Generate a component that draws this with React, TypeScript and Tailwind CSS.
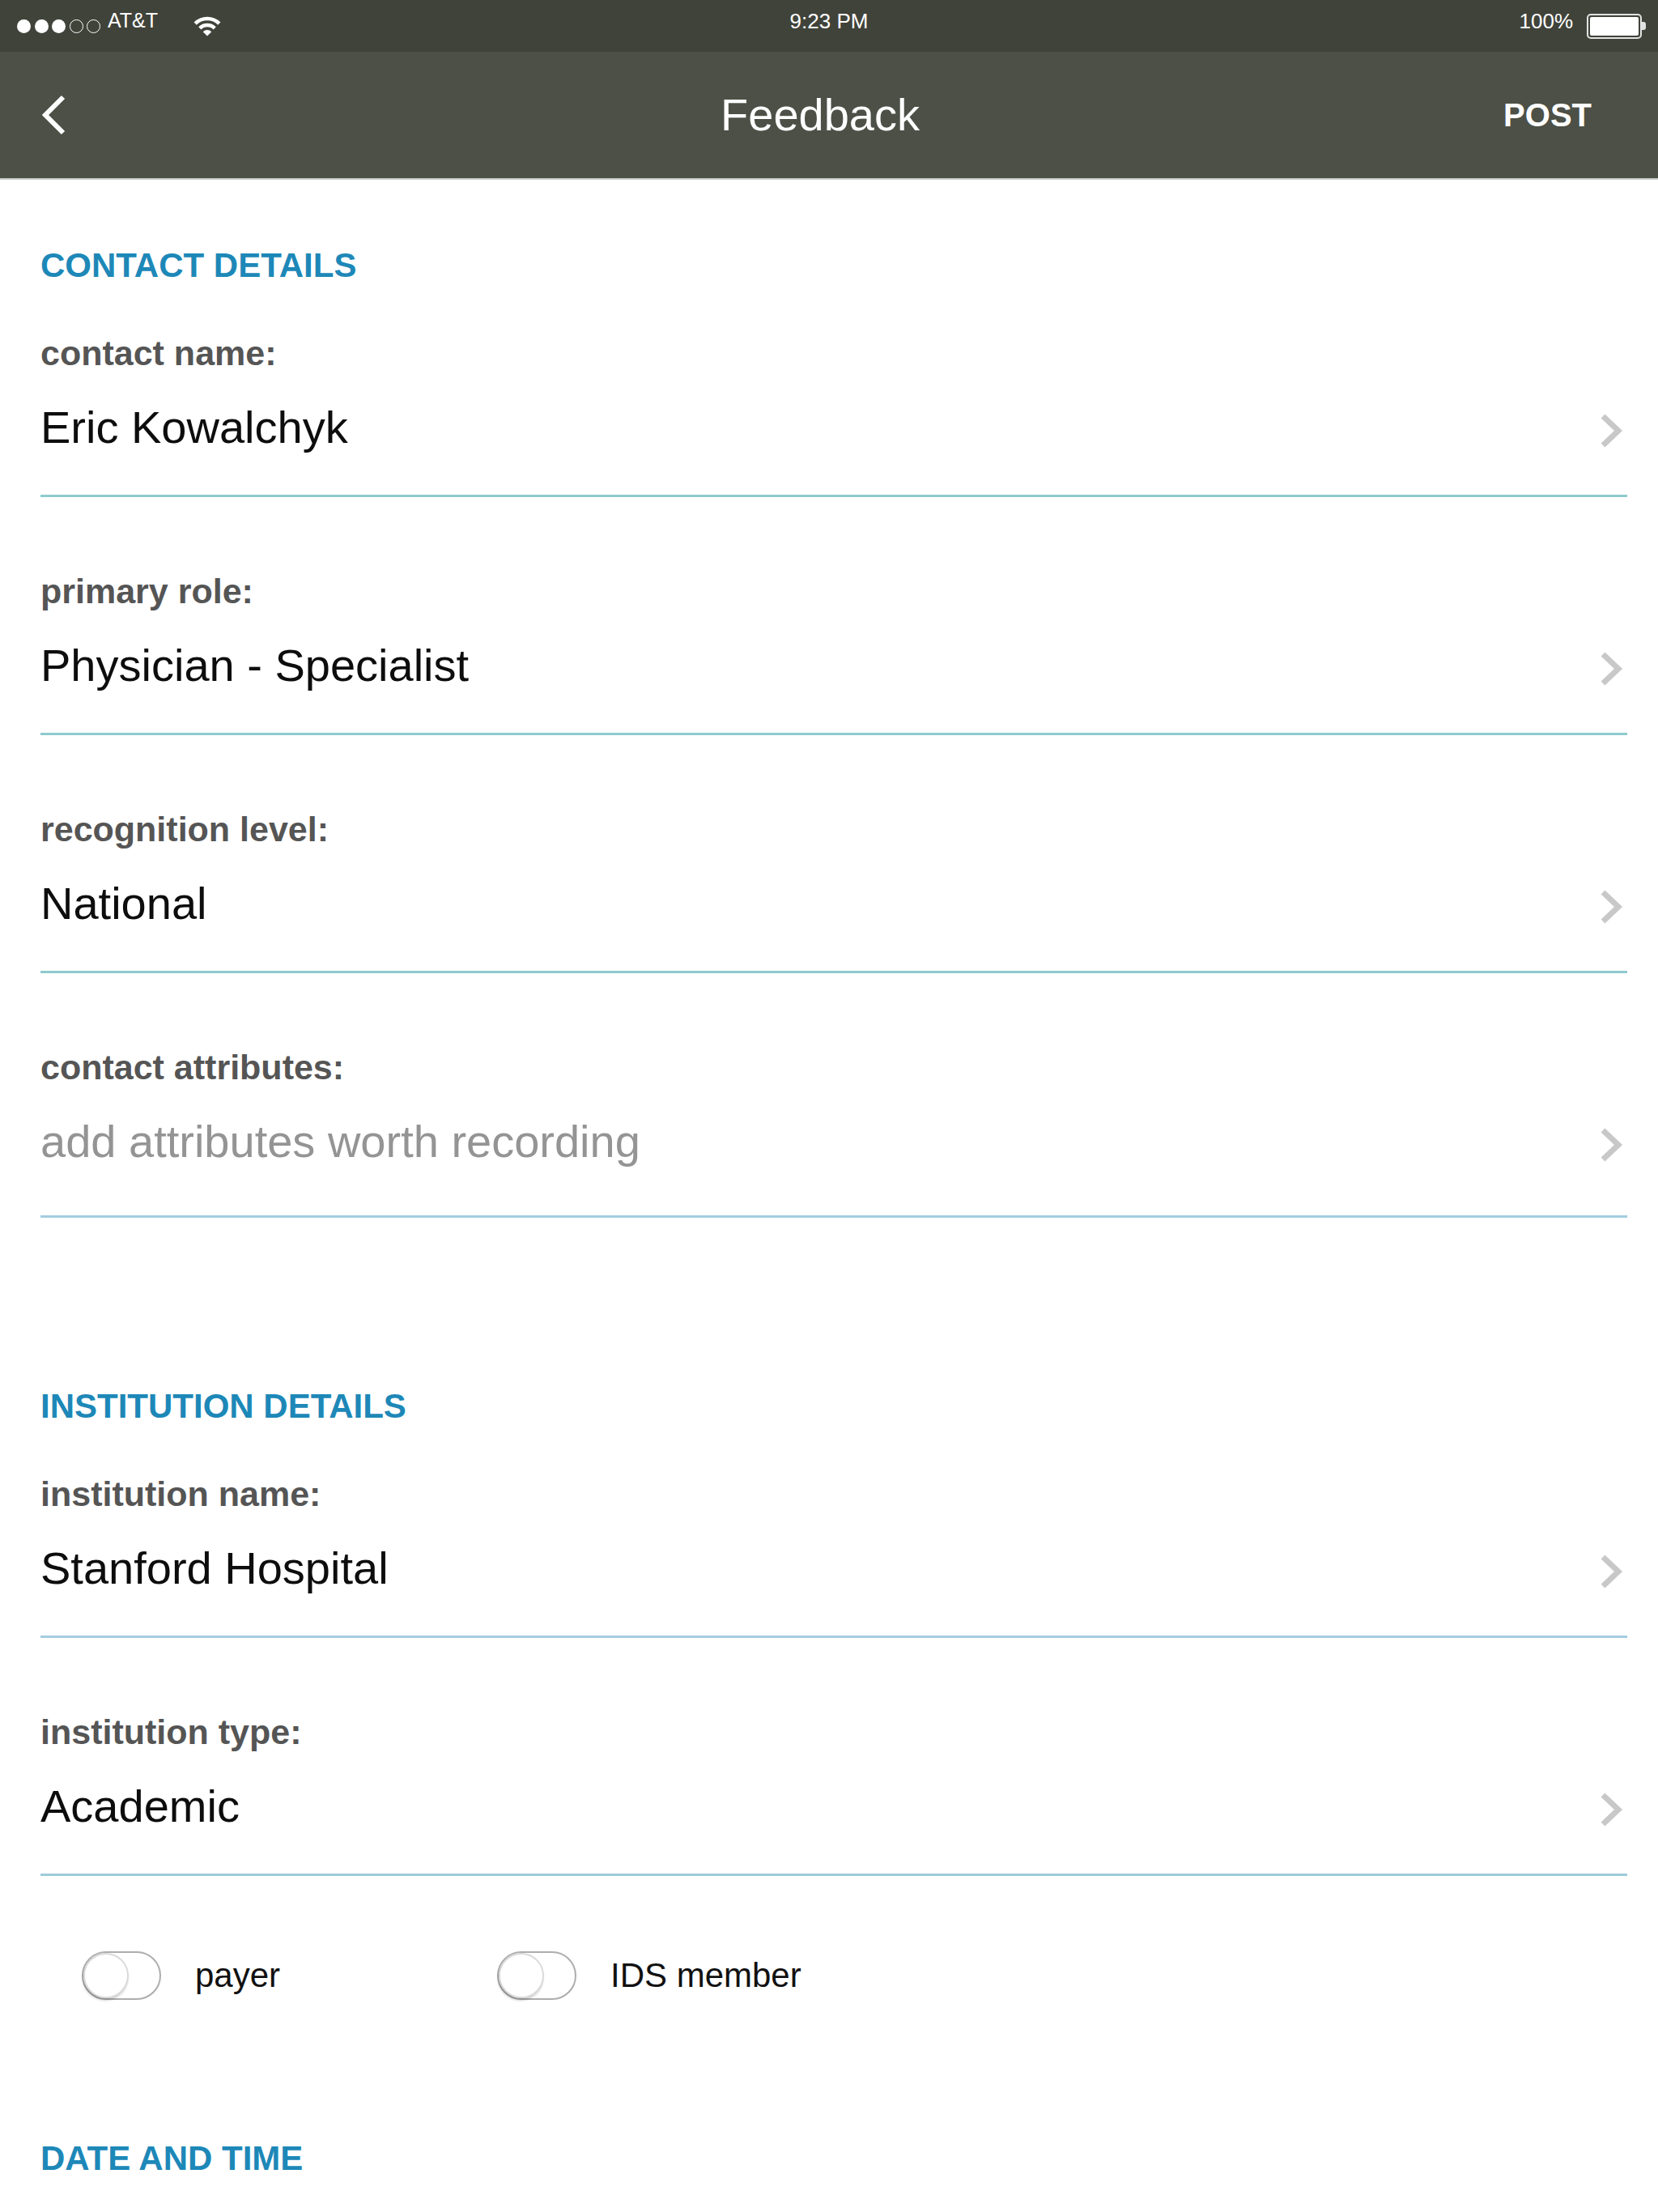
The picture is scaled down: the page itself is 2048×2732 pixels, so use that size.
import React from "react";

const ChevronRight = () => (
  <svg width="30" height="44" viewBox="0 0 30 44" className="mr-[4px] mt-[7px] shrink-0">
    <polyline points="4,4 23,22 4,40" fill="none" stroke="#c8c8c8" strokeWidth="7" />
  </svg>
);

const BackChevron = () => (
  <svg width="36" height="50" viewBox="0 0 36 50" className="ml-[48px]">
    <polyline points="30,3 8,25 30,47" fill="none" stroke="#ffffff" strokeWidth="6" />
  </svg>
);

const Wifi = () => (
  <svg width="38" height="27" viewBox="0 0 38 27" className="ml-[42px]">
    <path d="M4.2 10.2 A21 21 0 0 1 33.8 10.2" fill="none" stroke="#ffffff" strokeWidth="4.5" />
    <path d="M9.8 15.8 A13 13 0 0 1 28.2 15.8" fill="none" stroke="#ffffff" strokeWidth="4.5" />
    <path d="M19 25.5 L13.7 20.2 A7.5 7.5 0 0 1 24.3 20.2 Z" fill="#ffffff" />
  </svg>
);

const Battery = () => (
  <div className="flex items-center">
    <div className="h-[31px] w-[68px] rounded-[5px] border-2 border-[#e2e2e2] p-[2px]">
      <div className="h-full w-full rounded-[2px] bg-white" />
    </div>
    <div className="h-[10px] w-[5px] rounded-r-[3px] bg-[#e2e2e2]" />
  </div>
);

const SignalDots = () => (
  <div className="flex items-center gap-[4.5px]">
    <span className="h-[17px] w-[17px] rounded-full bg-white" />
    <span className="h-[17px] w-[17px] rounded-full bg-white" />
    <span className="h-[17px] w-[17px] rounded-full bg-white" />
    <span className="h-[17px] w-[17px] rounded-full border-[1.5px] border-white" />
    <span className="h-[17px] w-[17px] rounded-full border-[1.5px] border-white" />
  </div>
);

const SectionHeader = ({ children, top }: { children: React.ReactNode; top: string }) => (
  <h2 className={`${top} text-[42px] leading-[42px] font-bold text-[#1d88b8]`}>{children}</h2>
);

type FieldProps = {
  label: string;
  value: string;
  placeholder?: boolean;
  top?: string;
  gap?: string;
  line?: string;
};

const Field = ({
  label,
  value,
  placeholder = false,
  top = "pt-[95px]",
  gap = "mt-[55px]",
  line = "bg-[#8ecacd]",
}: FieldProps) => (
  <div className={top}>
    <div className="text-[43px] leading-[43px] font-bold text-[#555555]">{label}</div>
    <div className="mt-[42px] flex items-center">
      <div
        className={`flex-1 text-[56px] leading-[56px] ${placeholder ? "text-[#949494]" : "text-[#0d0d0d]"}`}
      >
        {value}
      </div>
      <ChevronRight />
    </div>
    <div className={`${gap} h-[3px] ${line}`} />
  </div>
);

const Toggle = () => (
  <div className="flex h-[60px] w-[98px] shrink-0 items-center rounded-full border-2 border-[#adadad] bg-white">
    <div className="h-[56px] w-[56px] rounded-full border-2 border-[#dadada] bg-white shadow-[-1px_3px_3px_rgba(0,0,0,0.18)]" />
  </div>
);

const App = () => {
  return (
    <div className="h-[2732px] w-[2048px] overflow-hidden bg-white font-['Liberation_Sans',Arial,sans-serif]">
      {/* Status bar */}
      <div className="grid h-[64px] grid-cols-[1fr_auto_1fr] items-center bg-[#40433a] text-white">
        <div className="flex items-center pl-[21px]">
          <SignalDots />
          <span className="ml-[9px] pb-[13px] text-[25px] leading-[25px]">AT&amp;T</span>
          <Wifi />
        </div>
        <span className="pb-[13px] text-[26px] leading-[26px]">9:23 PM</span>
        <div className="flex items-center justify-end pr-[15px]">
          <span className="mr-[17px] pb-[13px] text-[26px] leading-[26px]">100%</span>
          <Battery />
        </div>
      </div>

      {/* Navigation bar */}
      <div className="grid h-[156px] grid-cols-[1fr_auto_1fr] items-center bg-[#4c5046] text-white">
        <div className="flex items-center">
          <BackChevron />
        </div>
        <h1 className="pr-[22px] text-[56px] leading-[56px]">Feedback</h1>
        <div className="flex justify-end pr-[82px]">
          <button className="text-[40px] leading-[40px] font-bold text-white">POST</button>
        </div>
      </div>
      <div className="h-[2px] bg-[#c9c9c9]" />

      <main className="pl-[50px] pr-[38px]">
        <SectionHeader top="pt-[85px]">CONTACT DETAILS</SectionHeader>
        <Field top="pt-[66px]" label="contact name:" value="Eric Kowalchyk" />
        <Field label="primary role:" value="Physician - Specialist" />
        <Field label="recognition level:" value="National" />
        <Field
          label="contact attributes:"
          value="add attributes worth recording"
          placeholder
          gap="mt-[63px]"
          line="bg-[#a3cde0]"
        />

        <SectionHeader top="pt-[212px]">INSTITUTION DETAILS</SectionHeader>
        <Field top="pt-[66px]" label="institution name:" value="Stanford Hospital" line="bg-[#a3cde0]" />
        <Field label="institution type:" value="Academic" line="bg-[#9ccbd8]" />

        <div className="ml-[51px] flex pt-[93px]">
          <label className="flex w-[513px] items-center gap-[42px]">
            <Toggle />
            <span className="text-[42px] leading-[42px] text-[#111111]">payer</span>
          </label>
          <label className="flex items-center gap-[42px]">
            <Toggle />
            <span className="text-[42px] leading-[42px] text-[#111111]">IDS member</span>
          </label>
        </div>

        <SectionHeader top="pt-[175px]">DATE AND TIME</SectionHeader>
      </main>
    </div>
  );
};

export default App;
